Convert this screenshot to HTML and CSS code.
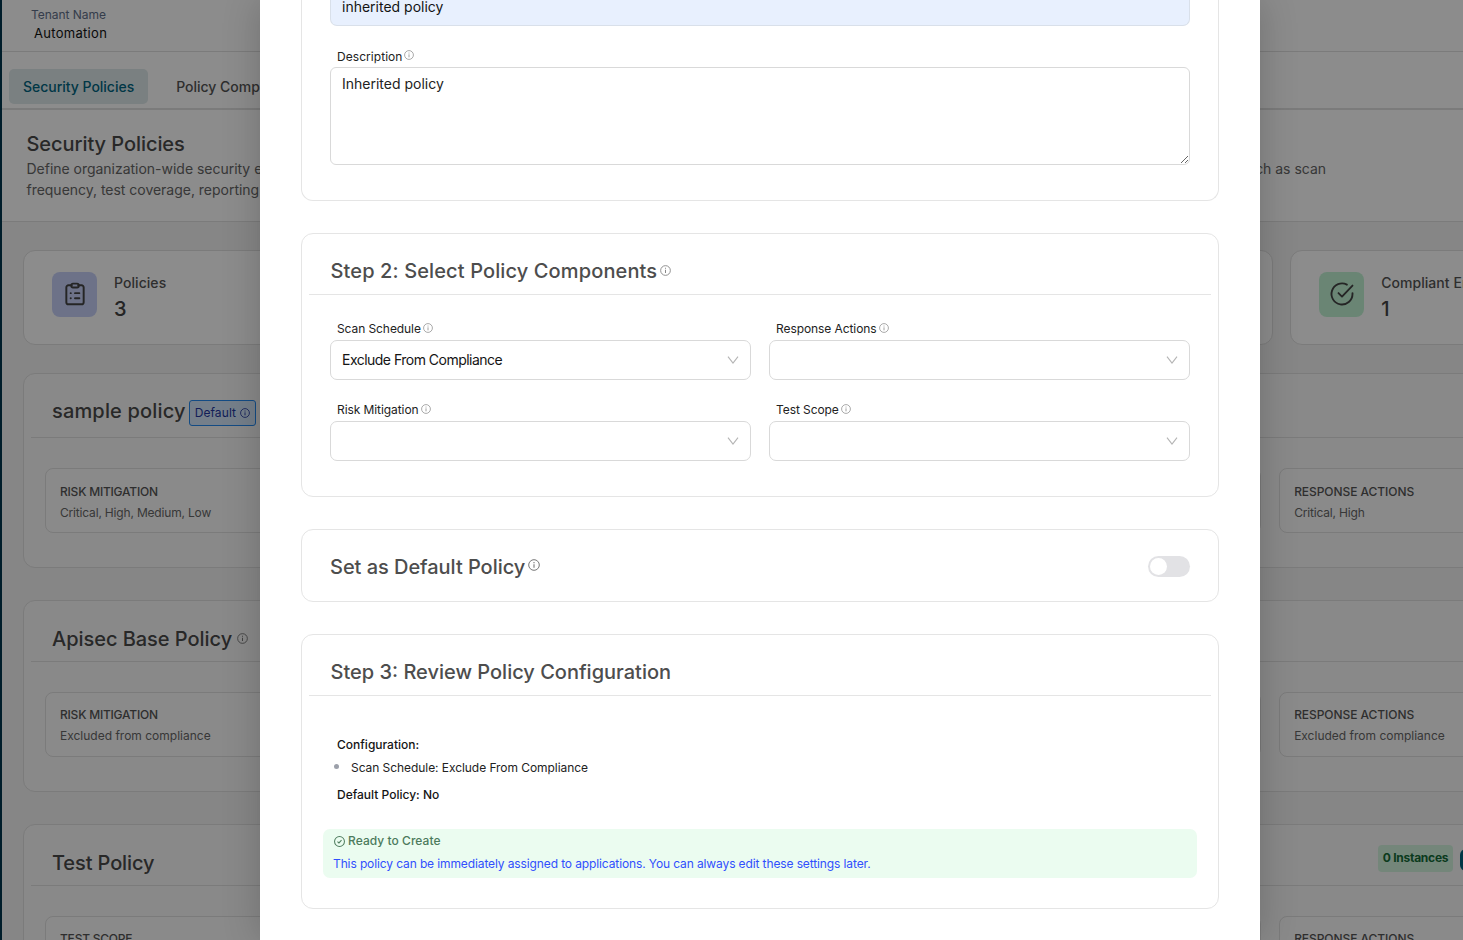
FILE: index.html
```html
<!DOCTYPE html>
<html lang="en">
<head>
<meta charset="utf-8">
<title>Security Policies</title>
<link rel="stylesheet" href="styles.css">
</head>
<body>
<svg class="defs" width="0" height="0">
  <symbol id="info" viewBox="0 0 12 12"><circle cx="6" cy="6" r="5.3" fill="none" stroke="currentColor" stroke-width="1"/><path d="M6 5.2v3.6M6 3.1v1.1" stroke="currentColor" stroke-width="1.1" fill="none"/></symbol>
  <symbol id="down" viewBox="0 0 12 8"><path d="M1 .6l5 6.400 5-6.400" fill="none" stroke="currentColor" stroke-width="1.1"/></symbol>
</svg>
<div class="page">
  <div class="rail"></div>
  <div class="main">
    <header class="tenant"><div class="tenant-label"><span>Tenant Name</span></div><div class="tenant-name"><span>Automation</span></div></header>
    <nav class="tabs"><a class="tab active"><span>Security Policies</span></a><a class="tab"><span>Policy Comp</span></a></nav>
    <section class="intro">
      <h1><span>Security Policies</span></h1>
      <div class="intro-row"><span>Define organization-wide security ex</span><span>such as scan</span></div>
      <div class="intro-row"><span>frequency, test coverage, reporting</span></div>
    </section>
    <section class="content">
      <div class="stats">
        <div class="stat"><div class="stat-icon blue"><svg width="26" height="26" viewBox="0 0 24 24" fill="none" stroke="currentColor" stroke-width="1.8" stroke-linecap="round" stroke-linejoin="round"><path d="M9 4H6a2 2 0 0 0-2 2v13.500a2 2 0 0 0 2 2h12a2 2 0 0 0 2-2V6a2 2 0 0 0-2-2H15"/><rect x="8.500" y="2.400" width="7" height="3.600" rx="1.600"/><path d="M8 11.200h.1M12 11.200h4M8 16h.1M12 16h4"/></svg></div><div><div class="stat-label">Policies</div><div class="stat-value">3</div></div></div>
        <div class="stat"></div><div class="stat"></div>
        <div class="stat"><div class="stat-icon green"><svg width="28" height="28" viewBox="0 0 24 24" fill="none" stroke="currentColor" stroke-width="1.6" stroke-linecap="round" stroke-linejoin="round"><path d="M21 11.200v.8a9 9 0 1 1-4.800-8"/><path d="M9 11.200l3 3 9-9.400"/></svg></div><div><div class="stat-label">Compliant Endpoints</div><div class="stat-value">1</div></div></div>
      </div>
      <article class="policy first">
        <div class="policy-head"><h2>sample policy</h2><span class="default-tag"><span>Default</span><svg width="10" height="10"><use href="#info"/></svg></span></div>
        <div class="parts"><div class="part"><b>RISK MITIGATION</b><span class="levels">Critical, High, Medium, Low</span></div><div class="part"></div><div class="part"></div><div class="part"><b class="wide">RESPONSE ACTIONS</b><span class="levels">Critical, High</span></div></div>
      </article>
      <article class="policy second">
        <div class="policy-head"><h2>Apisec Base Policy</h2><svg class="head-info" width="11" height="11"><use href="#info"/></svg></div>
        <div class="parts"><div class="part"><b>RISK MITIGATION</b><span>Excluded from compliance</span></div><div class="part"></div><div class="part"></div><div class="part"><b class="wide">RESPONSE ACTIONS</b><span>Excluded from compliance</span></div></div>
      </article>
      <article class="policy third">
        <div class="policy-head"><h2>Test Policy</h2><div class="actions"><span class="count">0 Instances</span><span class="pill"></span></div></div>
        <div class="parts"><div class="part"><b>TEST SCOPE</b></div><div class="part"></div><div class="part"></div><div class="part"><b class="wide">RESPONSE ACTIONS</b></div></div>
      </article>
    </section>
  </div>
</div>
<div class="mask">
  <div class="modal">
    <section class="card details">
      <div class="name-input"><span>inherited policy</span></div>
      <div class="label description"><span>Description</span><svg width="10" height="10"><use href="#info"/></svg></div>
      <textarea class="textarea">Inherited policy</textarea>
    </section>
    <section class="card components">
      <div class="card-title step-two"><span>Step 2: Select Policy Components</span><svg width="11" height="11"><use href="#info"/></svg></div>
      <div class="fields">
        <div class="field"><div class="label"><span>Scan Schedule</span><svg width="10" height="10"><use href="#info"/></svg></div><div class="select"><span>Exclude From Compliance</span><svg width="12" height="8"><use href="#down"/></svg></div></div>
        <div class="field"><div class="label"><span>Response Actions</span><svg width="10" height="10"><use href="#info"/></svg></div><div class="select"><span></span><svg width="12" height="8"><use href="#down"/></svg></div></div>
        <div class="field"><div class="label"><span>Risk Mitigation</span><svg width="10" height="10"><use href="#info"/></svg></div><div class="select"><span></span><svg width="12" height="8"><use href="#down"/></svg></div></div>
        <div class="field"><div class="label"><span>Test Scope</span><svg width="10" height="10"><use href="#info"/></svg></div><div class="select"><span></span><svg width="12" height="8"><use href="#down"/></svg></div></div>
      </div>
    </section>
    <section class="card default-card"><div class="default-title"><span>Set as Default Policy</span><svg width="12" height="12"><use href="#info"/></svg></div><div class="switch"><i></i></div></section>
    <section class="card review">
      <div class="card-title"><span>Step 3: Review Policy Configuration</span></div>
      <div class="summary">
        <div class="strong"><span>Configuration:</span></div>
        <div class="item"><i></i><span>Scan Schedule: Exclude From Compliance</span></div>
        <div class="strong last"><span>Default Policy: No</span></div>
      </div>
      <div class="alert">
        <div class="ready"><svg width="11" height="11" viewBox="0 0 12 12" fill="none" stroke="currentColor"><circle cx="6" cy="6" r="5.400" stroke-width="1.100"/><path d="M3.800 6.100l1.600 1.500 2.800-3" stroke-width="1.100"/></svg><span>Ready to Create</span></div>
        <div class="note"><span>This policy can be immediately assigned to applications. You can always edit these settings later.</span></div>
      </div>
    </section>
  </div>
</div>
</body>
</html>
```
FILE: styles.css
```css
* { box-sizing: border-box; }
html, body { margin: 0; height: 940px; overflow: hidden; }
body { font-family: Inter, "Liberation Sans", sans-serif; font-size: 14px; color: #141414; background: #f4f4f4; }
h1, h2 { margin: 0; font-weight: 500; }
svg { flex: none; display: block; }
.defs { position: absolute; }

.page { display: flex; width: 100%; height: 940px; overflow: hidden; }
.rail { flex: none; width: 2px; background: #00354d; }
.main { flex: none; width: 1717px; }
.tenant { height: 52px; padding: 6px 0 0 29px; background: #fff; border-bottom: 1px solid #e0e0e0; }
.tenant-label { font-size: 12px; line-height: 18px; color: #62708a; letter-spacing: -.03px; }
.tenant-name { padding-left: 3px; font-size: 13px; line-height: 18px; letter-spacing: .3px; color: #111; }
.tabs { display: flex; gap: 14px; height: 58px; padding: 17px 0 0 7px; background: #fff; border-bottom: 2px solid #e0e0e0; }
.tab { height: 35px; padding: 0 14px; border-radius: 5px; font-size: 14px; font-weight: 500; line-height: 36px; letter-spacing: -.02px; color: #555; white-space: nowrap; }
.tab.active { color: #006580; background: #dfe9eb; }
.intro { height: 112px; padding: 20px 0 0 24.500px; background: #fff; border-bottom: 1px solid #e0e0e0; }
.intro h1 { font-size: 20px; line-height: 28px; letter-spacing: -.06px; color: #4a4a4a; }
.intro-row { display: flex; justify-content: space-between; width: 1299.500px; font-size: 14px; line-height: 21px; letter-spacing: -.02px; color: #666; }
.content { padding: 28px 24px 0 21px; background: #f4f4f4; }
.stats { display: grid; grid-template-columns: repeat(4, 1fr); gap: 17.5px; }
.stat { display: flex; gap: 17px; height: 95px; padding: 21px 28px; background: #fff; border: 1px solid #e0e0e0; border-radius: 12px; }
.stat-icon { display: flex; align-items: center; justify-content: center; width: 45px; height: 45px; border-radius: 8px; color: #444; }
.stat-icon svg { margin-top: -1px; }
.blue { background: #c6d0f8; }
.green { background: #c1f3d4; }
.stat-label { height: 22px; font-size: 14px; font-weight: 500; line-height: 22px; letter-spacing: .06px; color: #555; white-space: nowrap; }
.stat-value { font-size: 20px; font-weight: 500; line-height: 30px; color: #444; }
.policy { height: 192px; margin-top: 32px; padding: 0 7px; background: #fafafa; border: 1px solid #e0e0e0; border-radius: 12px; }
.policy.first { height: 195px; margin-top: 28px; }
.policy-head { display: flex; align-items: center; height: 61px; padding: 15px 0 0 21px; border-bottom: 1px solid #e0e0e0; }
.first .policy-head { height: 64px; padding-top: 14px; }
.policy-head h2 { font-size: 20px; line-height: 28px; letter-spacing: -.04px; color: #4a4a4a; }
.first h2 { height: 31px; letter-spacing: .16px; }
.third h2 { letter-spacing: -.12px; }
.head-info { margin-left: 5px; color: #777; }
.default-tag { display: flex; align-items: center; gap: 4px; height: 26px; margin-left: 3px; padding: 0 5px; font-size: 12px; letter-spacing: .1px; color: #2438a0; background: #d6e8fc; border: 1px solid #2389f0; border-radius: 3px; }
.actions { display: flex; align-items: center; gap: 7px; margin: -8px 127px 0 auto; }
.count { width: 75px; height: 27px; border-radius: 4px; font-size: 12px; font-weight: 700; line-height: 26px; letter-spacing: -.25px; text-align: center; color: #146c38; background: #d3f5df; white-space: nowrap; }
.pill { width: 100px; height: 22px; margin-top: 2px; border-radius: 6px; background: #006580; }
.parts { display: grid; grid-template-columns: repeat(4, 1fr); gap: 18px; padding: 30px 14.5px 0 14px; }
.part { display: flex; flex-direction: column; height: 65px; padding: 11px 14px; font-size: 12px; background: #fcfcfc; border: 1px solid #e0e0e0; border-radius: 8px; line-height: 21px; color: #666; }
.first .part { padding-top: 12px; }
.part b { font-weight: 500; letter-spacing: -.22px; color: #555; }
.part .wide { letter-spacing: -.06px; }
.levels { letter-spacing: -.18px; }

.mask { position: absolute; inset: 0; padding: 0 203px 0 260px; background: rgba(0, 0, 0, .45); overflow: hidden; }
.modal { display: flex; flex-direction: column; gap: 32px; width: 1000px; height: 940px; padding: 0 41px; background: #fff; box-shadow: 0 0 36px rgba(0, 0, 0, .2); }
.card { flex: none; border: 1px solid #e5e5e5; border-radius: 12px; }
.details { height: 201px; padding: 0 28px; border-top: 0; border-radius: 0 0 12px 12px; }
.name-input { height: 26px; padding-left: 11px; line-height: 14px; background: #e8f0fe; border: 1px solid #d9e0ea; border-top: 0; border-radius: 0 0 7px 7px; }
.label { display: flex; gap: 2px; height: 20px; padding-left: 7px; font-size: 12px; line-height: 18px; letter-spacing: -.08px; color: #222; }
.label svg { margin-top: 3px; color: #999; }
.description { height: 19px; margin-top: 22px; }
.textarea { display: block; width: 100%; height: 98px; padding: 5px 11px; font: inherit; line-height: 21px; color: #222; background: #fff; border: 1px solid #d9d9d9; border-radius: 6px; outline: 0; resize: vertical; }
.description span { letter-spacing: .05px; }
.description svg { margin-top: 2px; }
.components { height: 264px; padding: 0 7px; }
.card-title { display: flex; align-items: center; gap: 3px; height: 61px; padding: 13px 0 0 21.500px; border-bottom: 1px solid #e5e5e5; font-size: 20px; font-weight: 500; line-height: 28px; color: #4d4d4d; }
.step-two { letter-spacing: .12px; }
.card-title svg { color: #888; }
.fields { display: grid; grid-template-columns: 1fr 1fr; gap: 21px 18px; padding: 25px 21px 0; }
.select { display: flex; align-items: center; justify-content: space-between; height: 40px; padding: 0 11px 1px; border: 1px solid #d9d9d9; border-radius: 7px; letter-spacing: -.52px; }
.select svg { color: #b4b4b4; }
.default-card { display: flex; justify-content: space-between; align-items: center; height: 73px; padding: 2px 28px 0; }
.default-title { display: flex; align-items: center; gap: 3px; font-size: 20px; font-weight: 500; letter-spacing: -.04px; color: #4d4d4d; }
.default-title svg { margin-top: -3px; color: #777; }
.switch { width: 42px; height: 21px; padding: 2px; border-radius: 11px; background: #e2e2e5; }
.switch i { display: block; width: 17px; height: 17px; border-radius: 50%; background: #fff; }
.review { height: 275px; padding: 0 7px; }
.summary { height: 133px; padding: 38px 0 0 28px; font-size: 12px; line-height: 22px; }
.strong { font-weight: 500; height: 22px; }
.item { display: flex; align-items: center; gap: 12px; height: 23px; margin-left: -3px; letter-spacing: -.06px; color: #222; }
.item i { width: 5px; height: 5px; margin-top: -2px; border-radius: 50%; background: #9ca0aa; }
.last { margin-top: 5px; }
.alert { height: 49px; margin: 0 14px; padding: 0 10px; border-radius: 7px; background: #ebfcf0; font-size: 12px; line-height: 23px; }
.ready { display: flex; align-items: center; gap: 3px; padding-left: 1px; font-weight: 500; letter-spacing: .05px; color: #4c7a5c; }
.ready svg { margin-top: 1px; }
.note { color: #304ffe; letter-spacing: -.115px; white-space: nowrap; }
```
